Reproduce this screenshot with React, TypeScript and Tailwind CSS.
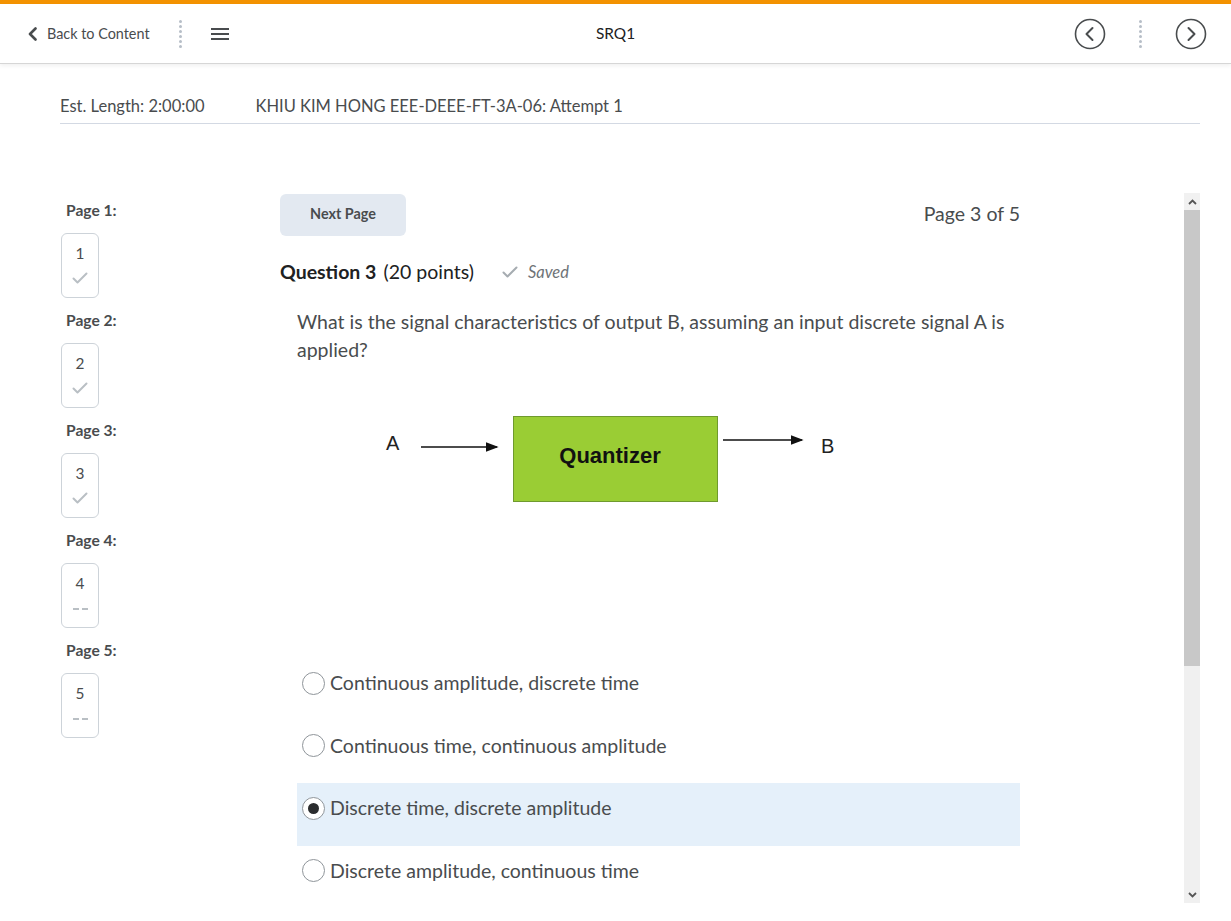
import React from "react";

const pages = [
  { n: 1, done: true },
  { n: 2, done: true },
  { n: 3, done: true },
  { n: 4, done: false },
  { n: 5, done: false },
];

const options = [
  { label: "Continuous amplitude, discrete time", selected: false },
  { label: "Continuous time, continuous amplitude", selected: false },
  { label: "Discrete time, discrete amplitude", selected: true },
  { label: "Discrete amplitude, continuous time", selected: false },
];

function Check({ className = "" }: { className?: string }) {
  return (
    <svg width="16" height="12" viewBox="0 0 16 12" className={className}>
      <path d="M1.5 6.5 L5.5 10.5 L14.5 1.5" fill="none" stroke="currentColor" strokeWidth="2" strokeLinecap="round" strokeLinejoin="round" />
    </svg>
  );
}

function DotsV() {
  return (
    <div className="flex flex-col gap-[2px]">
      {[0, 1, 2, 3, 4, 5].map((i) => (
        <span key={i} className="w-[3px] h-[3px] rounded-full bg-[#b6bec7]" />
      ))}
    </div>
  );
}

function CircleArrow({ dir }: { dir: "left" | "right" }) {
  return (
    <svg width="32" height="32" viewBox="0 0 32 32">
      <circle cx="16" cy="16" r="14.5" fill="none" stroke="#494c4e" strokeWidth="1.6" />
      {dir === "left" ? (
        <path d="M18.5 10 L12.5 16 L18.5 22" fill="none" stroke="#494c4e" strokeWidth="2" strokeLinecap="round" strokeLinejoin="round" />
      ) : (
        <path d="M13.5 10 L19.5 16 L13.5 22" fill="none" stroke="#494c4e" strokeWidth="2" strokeLinecap="round" strokeLinejoin="round" />
      )}
    </svg>
  );
}

function Header() {
  return (
    <header className="h-[60px] shrink-0 grid grid-cols-[1fr_auto_1fr] items-center bg-white border-b border-[#d6d6d6] shadow-[0_2px_4px_rgba(0,0,0,0.06)]">
      <div className="flex items-center pl-[27px]">
        <svg width="12" height="14" viewBox="0 0 12 14">
          <path d="M8.5 1.5 L3 7 L8.5 12.5" fill="none" stroke="#494c4e" strokeWidth="2.6" strokeLinecap="round" strokeLinejoin="round" />
        </svg>
        <span className="ml-[8px] text-[14.4px] text-[#494c4e]">Back to Content</span>
        <div className="ml-[29px]">
          <DotsV />
        </div>
        <div className="ml-[29px] flex flex-col gap-[3px]">
          <span className="w-[18px] h-[2px] bg-[#494c4e]" />
          <span className="w-[18px] h-[2px] bg-[#494c4e]" />
          <span className="w-[18px] h-[2px] bg-[#494c4e]" />
        </div>
      </div>
      <div className="text-center text-[15.4px] text-[#202122]">SRQ1</div>
      <div className="flex items-center justify-end pr-[24px]">
        <CircleArrow dir="left" />
        <div className="mx-[33px]">
          <DotsV />
        </div>
        <CircleArrow dir="right" />
      </div>
    </header>
  );
}

function Diagram() {
  return (
    <svg width="470" height="100" viewBox="380 405 470 100" className="block">
      <defs>
        <marker id="ah" markerWidth="8" markerHeight="6" refX="7" refY="3" orient="auto">
          <path d="M0 0 L8 3 L0 6 Z" fill="#111" />
        </marker>
      </defs>
      <text x="386" y="450" fontFamily="'Liberation Sans', Arial, sans-serif" fontSize="20" fill="#222">A</text>
      <line x1="421" y1="447" x2="497" y2="447" stroke="#111" strokeWidth="1.6" markerEnd="url(#ah)" />
      <rect x="513.5" y="416.5" width="204" height="85" fill="#9acd34" stroke="#6f9a2e" strokeWidth="1" />
      <text x="610" y="463" textAnchor="middle" fontFamily="'Liberation Sans', Arial, sans-serif" fontWeight="700" fontSize="22" fill="#111">Quantizer</text>
      <line x1="723" y1="440" x2="802" y2="440" stroke="#111" strokeWidth="1.6" markerEnd="url(#ah)" />
      <text x="821" y="453" fontFamily="'Liberation Sans', Arial, sans-serif" fontSize="20" fill="#222">B</text>
    </svg>
  );
}

function Radio({ on }: { on: boolean }) {
  return (
    <span className="w-[23px] h-[23px] rounded-full border border-[#8f959a] bg-white flex items-center justify-center shrink-0">
      {on && <span className="w-[11px] h-[11px] rounded-full bg-[#2a2c2e]" />}
    </span>
  );
}

function Scrollbar() {
  return (
    <div className="w-[16px] h-full flex flex-col bg-[#f0f0f0]">
      <div className="h-[17px] flex items-center justify-center bg-[#f1f1f1]">
        <svg width="9" height="6" viewBox="0 0 9 6"><path d="M1 5 L4.5 1.5 L8 5" fill="none" stroke="#555" strokeWidth="1.8" /></svg>
      </div>
      <div className="h-[456px] bg-[#c8c8c8]" />
      <div className="flex-1" />
      <div className="h-[17px] flex items-center justify-center">
        <svg width="9" height="6" viewBox="0 0 9 6"><path d="M1 1 L4.5 4.5 L8 1" fill="none" stroke="#555" strokeWidth="1.8" /></svg>
      </div>
    </div>
  );
}

export default function App() {
  return (
    <div className="w-[1231px] h-[921px] bg-white flex flex-col overflow-hidden text-[#494c4e]" style={{ fontFamily: "Lato, 'Noto Sans', sans-serif" }}>
      <div className="h-[4px] bg-[#f39200] shrink-0" />
      <Header />

      <div className="ml-[60px] mr-[31px] flex flex-col flex-1 min-h-0">
        <div className="flex items-center h-[24px] mt-[30px] text-[16.5px]">
          <span>Est. Length: 2:00:00</span>
          <span className="ml-[51px]">KHIU KIM HONG EEE-DEEE-FT-3A-06: Attempt 1</span>
        </div>
        <div className="mt-[5px] h-px bg-[#d3d9e3]" />

        <div className="mt-[69px] h-[710px] flex shrink-0">
          {/* Page list */}
          <div className="w-[220px] pt-[7px] flex flex-col">
            {pages.map((p) => (
              <div key={p.n} className="h-[110px] shrink-0">
                <div className="pl-[6px] h-[20px] leading-[20px] text-[15.6px] font-bold text-[#494c4e]">Page {p.n}:</div>
                <div className="mt-[13px] ml-[1px] w-[38px] h-[65px] rounded-[6px] border border-[#cdd3d9] flex flex-col items-center pt-[9px]">
                  <span className="text-[15.4px] leading-[20px] text-[#494c4e]">{p.n}</span>
                  {p.done ? (
                    <Check className="mt-[9px] text-[#b9bfc4]" />
                  ) : (
                    <span className="mt-[15px] flex gap-[3px]">
                      <span className="w-[6px] h-[2px] bg-[#b9bfc4]" />
                      <span className="w-[6px] h-[2px] bg-[#b9bfc4]" />
                    </span>
                  )}
                </div>
              </div>
            ))}
          </div>

          {/* Question */}
          <div className="w-[740px] flex flex-col overflow-hidden">
            <div className="flex items-center justify-between mt-[1px] shrink-0">
              <button className="w-[126px] h-[42px] rounded-[6px] bg-[#e3e9f1] text-[14.4px] font-bold text-[#494c4e] pb-[3px]">Next Page</button>
              <span className="text-[19.5px] text-[#494c4e] pb-[2px]">Page 3 of 5</span>
            </div>

            <div className="mt-[23px] flex items-center h-[26px] text-[19.5px] shrink-0">
              <span className="font-bold text-[#202122]">Question 3</span>
              <span className="ml-[7px] text-[#202122]">(20 points)</span>
              <Check className="ml-[28px] text-[#a6acb1]" />
              <span className="ml-[10px] text-[16.5px] italic text-[#6e7377]">Saved</span>
            </div>

            <div className="ml-[17px] mt-[23px] text-[19.5px] leading-[28px] text-[#494c4e] pr-[10px] shrink-0">
              What is the signal characteristics of output B, assuming an input discrete signal A is applied?
            </div>

            <div className="ml-[100px] mt-[41px] h-[253px] shrink-0">
              <Diagram />
            </div>

            <div className="ml-[17px] flex flex-col shrink-0">
              {options.map((o) => (
                <div
                  key={o.label}
                  className={`h-[62.5px] flex items-start pt-[12px] pl-[5px] ${o.selected ? "bg-[#e5f0fa]" : ""}`}
                >
                  <div className="flex items-center h-[26px]">
                    <Radio on={o.selected} />
                    <span className="ml-[5px] text-[19.5px] text-[#494c4e]">{o.label}</span>
                  </div>
                </div>
              ))}
            </div>
          </div>

          <div className="flex-1" />
          <Scrollbar />
        </div>
      </div>
    </div>
  );
}
